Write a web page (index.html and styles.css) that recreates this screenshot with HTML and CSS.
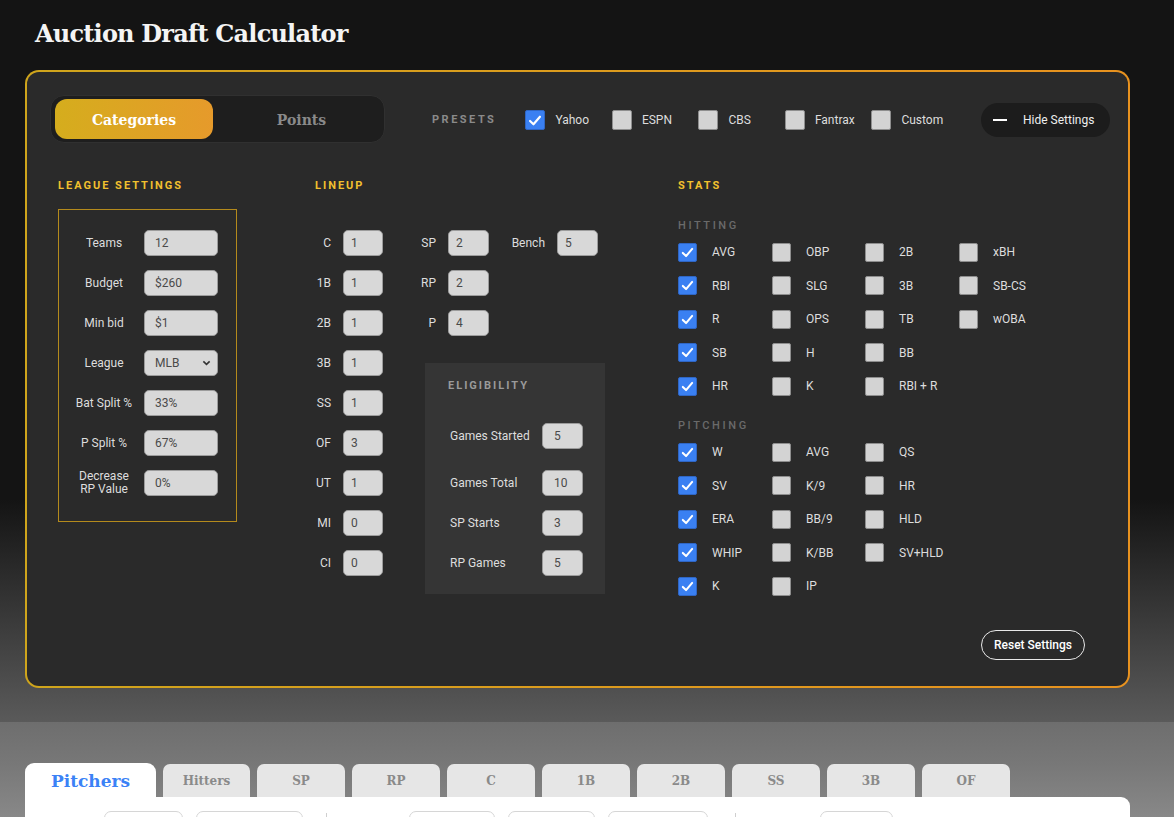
FILE: index.html
```html
<!DOCTYPE html>
<html>
<head>
<meta charset="utf-8">
<title>Auction Draft Calculator</title>
<link rel="stylesheet" href="styles.css">
</head>
<body>
<div class="top">
  <h1 class="title">Auction Draft Calculator</h1>
  <div class="panel">
    <div class="toolbar">
      <div class="toggle">
        <div class="toggle-opt active">Categories</div>
        <div class="toggle-opt">Points</div>
      </div>
      <div class="presets-label">PRESETS</div>
      <div class="presets">
        <div class="preset"><span class="cb on"><svg viewBox="0 0 20 20"><polyline points="4.5,10.5 8.3,14.2 15.5,5.8"/></svg></span><span>Yahoo</span></div>
        <div class="preset"><span class="cb"></span><span>ESPN</span></div>
        <div class="preset"><span class="cb"></span><span>CBS</span></div>
        <div class="preset"><span class="cb"></span><span>Fantrax</span></div>
        <div class="preset"><span class="cb"></span><span>Custom</span></div>
      </div>
      <div class="hide-btn"><span class="dash"></span><span>Hide Settings</span></div>
    </div>

    <div class="sections">
      <div class="col-league">
        <div class="sec-head">LEAGUE SETTINGS</div>
        <div class="league-box">
          <div class="lrow"><div class="llabel">Teams</div><div class="inp">12</div></div>
          <div class="lrow"><div class="llabel">Budget</div><div class="inp">$260</div></div>
          <div class="lrow"><div class="llabel">Min bid</div><div class="inp">$1</div></div>
          <div class="lrow"><div class="llabel">League</div><div class="inp select">MLB<svg viewBox="0 0 10 6"><polyline points="1.5,1.2 5,4.5 8.5,1.2"/></svg></div></div>
          <div class="lrow"><div class="llabel">Bat Split %</div><div class="inp">33%</div></div>
          <div class="lrow"><div class="llabel">P Split %</div><div class="inp">67%</div></div>
          <div class="lrow"><div class="llabel">Decrease<br>RP Value</div><div class="inp">0%</div></div>
        </div>
      </div>

      <div class="col-lineup">
        <div class="sec-head">LINEUP</div>
        <div class="lineup">
          <div class="lu-l">C</div><div class="inp">1</div>
          <div class="lu-l">SP</div><div class="inp">2</div>
          <div class="lu-l">Bench</div><div class="inp">5</div>

          <div class="lu-l">1B</div><div class="inp">1</div>
          <div class="lu-l">RP</div><div class="inp">2</div>
          <div></div><div></div>

          <div class="lu-l">2B</div><div class="inp">1</div>
          <div class="lu-l">P</div><div class="inp">4</div>
          <div></div><div></div>

          <div class="elig">
            <div class="elig-head">ELIGIBILITY</div>
            <div class="erow first"><div class="elabel">Games Started</div><div class="inp">5</div></div>
            <div class="erow"><div class="elabel">Games Total</div><div class="inp">10</div></div>
            <div class="erow"><div class="elabel">SP Starts</div><div class="inp">3</div></div>
            <div class="erow"><div class="elabel">RP Games</div><div class="inp">5</div></div>
          </div>

          <div class="lu-l">3B</div><div class="inp">1</div>
          <div class="lu-l">SS</div><div class="inp">1</div>
          <div class="lu-l">OF</div><div class="inp">3</div>
          <div class="lu-l">UT</div><div class="inp">1</div>
          <div class="lu-l">MI</div><div class="inp">0</div>
          <div class="lu-l">CI</div><div class="inp">0</div>
        </div>
      </div>

      <div class="col-stats">
        <div class="sec-head">STATS</div>
        <div class="sub-head">HITTING</div>
        <div class="stat-grid">
          <div class="stat"><span class="cb on"><svg viewBox="0 0 20 20"><polyline points="4.5,10.5 8.3,14.2 15.5,5.8"/></svg></span>AVG</div>
          <div class="stat"><span class="cb"></span>OBP</div>
          <div class="stat"><span class="cb"></span>2B</div>
          <div class="stat"><span class="cb"></span>xBH</div>

          <div class="stat"><span class="cb on"><svg viewBox="0 0 20 20"><polyline points="4.5,10.5 8.3,14.2 15.5,5.8"/></svg></span>RBI</div>
          <div class="stat"><span class="cb"></span>SLG</div>
          <div class="stat"><span class="cb"></span>3B</div>
          <div class="stat"><span class="cb"></span>SB-CS</div>

          <div class="stat"><span class="cb on"><svg viewBox="0 0 20 20"><polyline points="4.5,10.5 8.3,14.2 15.5,5.8"/></svg></span>R</div>
          <div class="stat"><span class="cb"></span>OPS</div>
          <div class="stat"><span class="cb"></span>TB</div>
          <div class="stat"><span class="cb"></span>wOBA</div>

          <div class="stat"><span class="cb on"><svg viewBox="0 0 20 20"><polyline points="4.5,10.5 8.3,14.2 15.5,5.8"/></svg></span>SB</div>
          <div class="stat"><span class="cb"></span>H</div>
          <div class="stat"><span class="cb"></span>BB</div>
          <div></div>

          <div class="stat"><span class="cb on"><svg viewBox="0 0 20 20"><polyline points="4.5,10.5 8.3,14.2 15.5,5.8"/></svg></span>HR</div>
          <div class="stat"><span class="cb"></span>K</div>
          <div class="stat"><span class="cb"></span>RBI + R</div>
          <div></div>
        </div>

        <div class="sub-head pitching">PITCHING</div>
        <div class="stat-grid">
          <div class="stat"><span class="cb on"><svg viewBox="0 0 20 20"><polyline points="4.5,10.5 8.3,14.2 15.5,5.8"/></svg></span>W</div>
          <div class="stat"><span class="cb"></span>AVG</div>
          <div class="stat"><span class="cb"></span>QS</div>
          <div></div>

          <div class="stat"><span class="cb on"><svg viewBox="0 0 20 20"><polyline points="4.5,10.5 8.3,14.2 15.5,5.8"/></svg></span>SV</div>
          <div class="stat"><span class="cb"></span>K/9</div>
          <div class="stat"><span class="cb"></span>HR</div>
          <div></div>

          <div class="stat"><span class="cb on"><svg viewBox="0 0 20 20"><polyline points="4.5,10.5 8.3,14.2 15.5,5.8"/></svg></span>ERA</div>
          <div class="stat"><span class="cb"></span>BB/9</div>
          <div class="stat"><span class="cb"></span>HLD</div>
          <div></div>

          <div class="stat"><span class="cb on"><svg viewBox="0 0 20 20"><polyline points="4.5,10.5 8.3,14.2 15.5,5.8"/></svg></span>WHIP</div>
          <div class="stat"><span class="cb"></span>K/BB</div>
          <div class="stat"><span class="cb"></span>SV+HLD</div>
          <div></div>

          <div class="stat"><span class="cb on"><svg viewBox="0 0 20 20"><polyline points="4.5,10.5 8.3,14.2 15.5,5.8"/></svg></span>K</div>
          <div class="stat"><span class="cb"></span>IP</div>
          <div></div>
          <div></div>
        </div>
      </div>
    </div>

    <div class="reset-row"><div class="reset-btn">Reset Settings</div></div>
  </div>
</div>

<div class="bottom">
  <div class="tabs">
    <div class="tab active">Pitchers</div>
    <div class="tab narrow">Hitters</div>
    <div class="tab">SP</div>
    <div class="tab">RP</div>
    <div class="tab">C</div>
    <div class="tab">1B</div>
    <div class="tab">2B</div>
    <div class="tab">SS</div>
    <div class="tab">3B</div>
    <div class="tab">OF</div>
  </div>
  <div class="table-card">
    <div class="filters">
      <div class="fbox w79"></div>
      <div class="fbox w107"></div>
      <div class="vline"></div>
      <div class="fbox w86 ml82"></div>
      <div class="fbox w87"></div>
      <div class="fbox w100"></div>
      <div class="vline second"></div>
      <div class="fbox w73 ml84"></div>
    </div>
  </div>
</div>
</body>
</html>
```

FILE: styles.css
```css
* { box-sizing: border-box; }
html, body { margin: 0; padding: 0; }
body {
  font-family: Roboto, "Liberation Sans", Arial, sans-serif;
  background: #8e8e8e;
  overflow: hidden;
  height: 817px;
}

/* top dark area */
.top {
  height: 722px;
  padding: 0 44px 34px 25px;
  background: linear-gradient(to bottom, #141414 0, #141414 500px, #5a5a5a 722px);
}
.title {
  margin: 0;
  height: 70px;
  padding-left: 10px;
  padding-top: 17px;
  font-family: "DejaVu Serif", "Liberation Serif", serif;
  font-weight: bold;
  font-size: 24px;
  line-height: 34px;
  color: #f4f4f4;
  letter-spacing: -0.8px;
}

.panel {
  height: 618px;
  border: 2px solid transparent;
  border-radius: 14px;
  background:
    linear-gradient(#2a2a2a, #2a2a2a) padding-box,
    linear-gradient(90deg, #cfa51c, #e8921f) border-box;
  padding: 23px 18px 26px 23px;
}

/* toolbar */
.toolbar {
  display: flex;
  align-items: flex-start;
  height: 48px;
}
.toggle {
  width: 335px;
  height: 48px;
  background: #1e1e1e;
  border: 1px solid #303030;
  border-radius: 14px;
  padding: 3px 4px;
  display: flex;
}
.toggle-opt {
  flex: 1;
  display: flex;
  align-items: center;
  justify-content: center;
  padding-top: 2px;
  padding-left: 10px;
  font-family: "DejaVu Serif", "Liberation Serif", serif;
  font-weight: bold;
  font-size: 14px;
  color: #8a8a8a;
  border-radius: 12px;
}
.toggle-opt.active {
  flex: 0 0 158px;
  padding-left: 0;
  color: #ffffff;
  background: linear-gradient(90deg, #d5ad1d, #e69a2b);
}
.presets-label {
  margin-left: 47px;
  margin-top: 18px;
  line-height: 13px;
  font-size: 11px;
  font-weight: 700;
  letter-spacing: 2.5px;
  color: #8a8a8a;
}
.presets {
  display: flex;
  margin-left: 29px;
  margin-top: 15px;
}
.preset {
  width: 86.5px;
  height: 20px;
  display: flex;
  align-items: center;
  gap: 10px;
  font-size: 12px;
  color: #dddddd;
}
.cb {
  flex: 0 0 19px;
  width: 19px;
  height: 19px;
  border-radius: 2px;
  background: #d3d3d3;
  border: 1px solid #8e8e8e;
  display: inline-flex;
  align-items: center;
  justify-content: center;
}
.cb.on {
  background: #3a80f2;
  border-color: #2f66c4;
}
.cb svg {
  width: 19px;
  height: 19px;
  fill: none;
  stroke: #ffffff;
  stroke-width: 2.4;
  stroke-linecap: round;
  stroke-linejoin: round;
}
.preset .cb { flex-basis: 20px; width: 20px; height: 20px; }

.hide-btn {
  margin-left: auto;
  margin-top: 8px;
  height: 34px;
  width: 129px;
  border-radius: 17px;
  background: #1c1c1c;
  display: flex;
  align-items: center;
  padding-left: 12px;
  gap: 16px;
  font-size: 12px;
  color: #eeeeee;
}
.dash {
  width: 14px;
  height: 2px;
  background: #ffffff;
}

/* sections */
.sections {
  display: flex;
  margin-top: 36px;
  margin-left: 8px;
}
.sec-head {
  font-size: 11px;
  font-weight: 700;
  letter-spacing: 2px;
  line-height: 13px;
  color: #f2c02e;
}
.col-league { flex: 0 0 257px; }
.col-lineup { flex: 0 0 363px; }
.col-stats { flex: 1; }

.league-box {
  margin-top: 17px;
  width: 179px;
  height: 313px;
  border: 1px solid #b48a1c;
  padding: 20px 0 0 5px;
  display: flex;
  flex-direction: column;
  gap: 14px;
}
.lrow {
  display: flex;
  align-items: center;
  height: 26px;
}
.llabel {
  width: 80px;
  text-align: center;
  font-size: 12px;
  line-height: 13px;
  color: #dddddd;
}
.inp {
  height: 26px;
  background: #d8d8d8;
  border: 1px solid #9c9c9c;
  border-radius: 5px;
  font-size: 12px;
  color: #4a4a4a;
  display: flex;
  align-items: center;
  padding-left: 10px;
}
.lrow .inp { width: 74px; }
.inp.select {
  justify-content: space-between;
  padding-right: 6px;
}
.inp.select svg {
  width: 9px;
  height: 6px;
  fill: none;
  stroke: #333;
  stroke-width: 1.8;
}

.lineup {
  margin-top: 38px;
  display: grid;
  grid-template-columns: 16px 40px 41px 41px 44px 41px;
  grid-auto-rows: 26px;
  column-gap: 12px;
  row-gap: 14px;
}
.lu-l {
  display: flex;
  align-items: center;
  justify-content: flex-end;
  font-size: 12px;
  color: #dddddd;
  white-space: nowrap;
}
.lineup .inp { padding-left: 7px; }

.elig {
  grid-column: 3 / 7;
  grid-row: 4 / 10;
  justify-self: start;
  align-self: start;
  margin-left: 30px;
  margin-top: 13px;
  margin-bottom: -18px;
  width: 180px;
  height: 231px;
  background: #353535;
  padding: 16px 0 0 23px;
}
.elig-head {
  font-size: 11px;
  font-weight: 700;
  letter-spacing: 2px;
  line-height: 13px;
  color: #9a9a9a;
}
.erow {
  display: flex;
  align-items: center;
  height: 26px;
  margin-top: 14px;
}
.erow.first { margin-top: 31px; margin-bottom: 21px; }
.elabel {
  width: 94px;
  padding-left: 2px;
  font-size: 12px;
  color: #dddddd;
}
.erow .inp { width: 41px; padding-left: 11px; }

.sub-head {
  margin-top: 27px;
  font-size: 11px;
  letter-spacing: 2.6px;
  line-height: 13px;
  font-weight: 500;
  color: #6a6a6a;
}
.sub-head.pitching { margin-top: 23.5px; }
.stat-grid {
  margin-top: 10.5px;
  display: grid;
  grid-template-columns: 94px 93px 94px 93px;
  grid-auto-rows: 19px;
  row-gap: 14.5px;
}
.stat {
  display: flex;
  align-items: center;
  gap: 15px;
  font-size: 12px;
  color: #dddddd;
  white-space: nowrap;
}

.reset-row {
  display: flex;
  justify-content: flex-end;
  margin-top: 34.5px;
  padding-right: 25px;
}
.reset-btn {
  width: 104px;
  height: 30px;
  border: 1px solid #e8e8e8;
  border-radius: 15px;
  display: flex;
  align-items: center;
  justify-content: center;
  font-size: 12px;
  font-weight: 500;
  color: #ffffff;
}

/* bottom area */
.bottom {
  height: 300px;
  padding: 41px 44px 0 25px;
  background: linear-gradient(to bottom, #6e6e6e 0, #777777 40px, #888888 95px, #949494 300px);
}
.tabs {
  display: flex;
  gap: 7px;
  align-items: flex-end;
}
.tab {
  width: 88px;
  height: 33px;
  background: #e6e6e6;
  border-radius: 7px 7px 0 0;
  display: flex;
  align-items: center;
  justify-content: center;
  font-family: "DejaVu Serif", "Liberation Serif", serif;
  font-weight: bold;
  font-size: 12px;
  color: #8a8a8a;
  padding-top: 1px;
}
.tab.narrow { width: 87px; }
.tab.active {
  width: 131px;
  height: 34px;
  background: #ffffff;
  border-radius: 9px 9px 0 0;
  font-size: 17px;
  color: #3b82f6;
  padding-top: 2px;
}
.table-card {
  height: 120px;
  background: #ffffff;
  border-radius: 0 9px 0 0;
  padding: 14px 0 0 79px;
}
.filters {
  display: flex;
  align-items: flex-start;
}
.fbox {
  height: 30px;
  border: 1px solid #d6d6d6;
  border-radius: 7px;
  margin-right: 13px;
}
.w79 { width: 79px; }
.w107 { width: 107px; }
.w86 { width: 86px; }
.w87 { width: 87px; }
.w100 { width: 100px; }
.w73 { width: 73px; }
.ml82 { margin-left: 82px; }
.ml84 { margin-left: 84px; }
.vline {
  width: 1px;
  height: 30px;
  background: #cfcfcf;
  margin-top: 2px;
  margin-left: 10px;
}
.vline.second { margin-left: 14px; }
```
